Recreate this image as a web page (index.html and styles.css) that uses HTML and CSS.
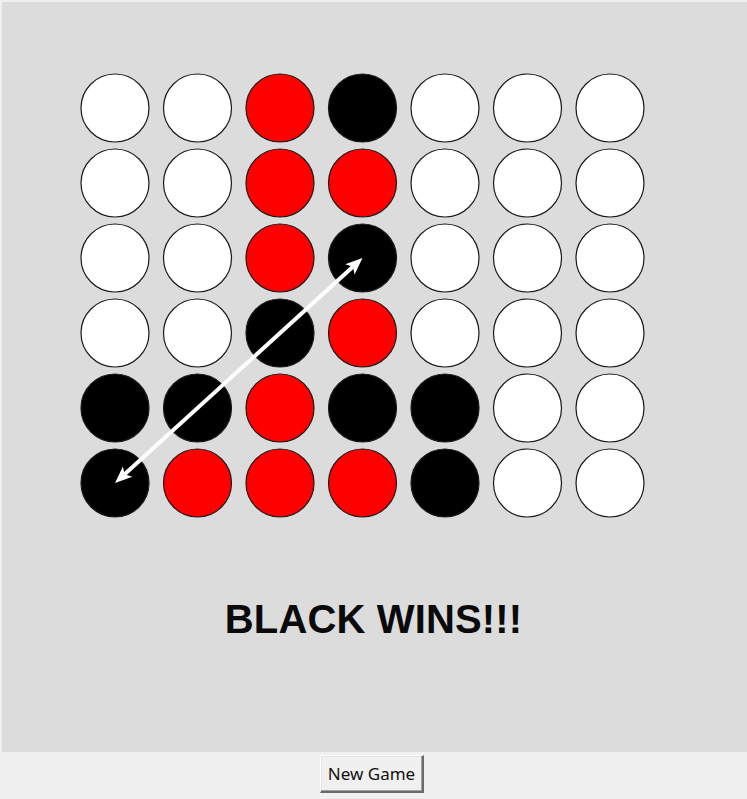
FILE: index.html
```html
<!DOCTYPE html>
<html>
<head>
<meta charset="utf-8">
<title>Connect Four</title>
<link rel="stylesheet" href="styles.css">
</head>
<body>
<div class="canvas">
  <svg class="board" width="745" height="530" viewBox="2 2 745 530" xmlns="http://www.w3.org/2000/svg">
    <g stroke="#1a1a1a" stroke-width="1.2">
      <!-- row 1 -->
      <circle cx="115" cy="108" r="34" fill="#fff"/>
      <circle cx="197.5" cy="108" r="34" fill="#fff"/>
      <circle cx="280" cy="108" r="34" fill="#f00"/>
      <circle cx="362.5" cy="108" r="34" fill="#000"/>
      <circle cx="445" cy="108" r="34" fill="#fff"/>
      <circle cx="527.5" cy="108" r="34" fill="#fff"/>
      <circle cx="610" cy="108" r="34" fill="#fff"/>
      <!-- row 2 -->
      <circle cx="115" cy="183" r="34" fill="#fff"/>
      <circle cx="197.5" cy="183" r="34" fill="#fff"/>
      <circle cx="280" cy="183" r="34" fill="#f00"/>
      <circle cx="362.5" cy="183" r="34" fill="#f00"/>
      <circle cx="445" cy="183" r="34" fill="#fff"/>
      <circle cx="527.5" cy="183" r="34" fill="#fff"/>
      <circle cx="610" cy="183" r="34" fill="#fff"/>
      <!-- row 3 -->
      <circle cx="115" cy="258" r="34" fill="#fff"/>
      <circle cx="197.5" cy="258" r="34" fill="#fff"/>
      <circle cx="280" cy="258" r="34" fill="#f00"/>
      <circle cx="362.5" cy="258" r="34" fill="#000"/>
      <circle cx="445" cy="258" r="34" fill="#fff"/>
      <circle cx="527.5" cy="258" r="34" fill="#fff"/>
      <circle cx="610" cy="258" r="34" fill="#fff"/>
      <!-- row 4 -->
      <circle cx="115" cy="333" r="34" fill="#fff"/>
      <circle cx="197.5" cy="333" r="34" fill="#fff"/>
      <circle cx="280" cy="333" r="34" fill="#000"/>
      <circle cx="362.5" cy="333" r="34" fill="#f00"/>
      <circle cx="445" cy="333" r="34" fill="#fff"/>
      <circle cx="527.5" cy="333" r="34" fill="#fff"/>
      <circle cx="610" cy="333" r="34" fill="#fff"/>
      <!-- row 5 -->
      <circle cx="115" cy="408" r="34" fill="#000"/>
      <circle cx="197.5" cy="408" r="34" fill="#000"/>
      <circle cx="280" cy="408" r="34" fill="#f00"/>
      <circle cx="362.5" cy="408" r="34" fill="#000"/>
      <circle cx="445" cy="408" r="34" fill="#000"/>
      <circle cx="527.5" cy="408" r="34" fill="#fff"/>
      <circle cx="610" cy="408" r="34" fill="#fff"/>
      <!-- row 6 -->
      <circle cx="115" cy="483" r="34" fill="#000"/>
      <circle cx="197.5" cy="483" r="34" fill="#f00"/>
      <circle cx="280" cy="483" r="34" fill="#f00"/>
      <circle cx="362.5" cy="483" r="34" fill="#f00"/>
      <circle cx="445" cy="483" r="34" fill="#000"/>
      <circle cx="527.5" cy="483" r="34" fill="#fff"/>
      <circle cx="610" cy="483" r="34" fill="#fff"/>
    </g>
    <g fill="#fff">
      <line x1="124.6" y1="474.3" x2="352.9" y2="266.8" stroke="#fff" stroke-width="4"/>
      <polygon points="362.5,258 354.6,274.6 352.9,266.8 345.2,264.3"/>
      <polygon points="115,483 132.3,476.7 124.6,474.3 122.9,466.4"/>
    </g>
  </svg>
  <div class="message">BLACK WINS!!!</div>
</div>
<div class="controls">
  <button class="btn" type="button">New Game</button>
</div>
</body>
</html>
```

FILE: styles.css
```css
html, body {
  margin: 0;
  padding: 0;
}
body {
  background: #f0f0f0;
  width: 747px;
  height: 799px;
  overflow: hidden;
}
.canvas {
  margin: 2px 0 0 2px;
  width: 745px;
  height: 750px;
  background: #dcdcdc;
  display: flex;
  flex-direction: column;
}
.board {
  display: block;
}
.message {
  margin-top: 62px;
  height: 50px;
  line-height: 50px;
  text-align: center;
  font-family: "Liberation Sans", Arial, sans-serif;
  font-weight: bold;
  font-size: 40px;
  color: #0a0a0a;
  padding-right: 2px;
  letter-spacing: 0.15px;
}
.controls {
  display: flex;
  justify-content: center;
  padding-top: 3px;
  padding-right: 3px;
}
.btn {
  width: 104px;
  height: 38px;
  margin: 0;
  padding: 0;
  background: #f0f0f0;
  border-style: solid;
  border-width: 1px 2px 2px 1px;
  border-color: #ffffff #6a6a6a #6a6a6a #ffffff;
  box-shadow: inset -1px -1px 0 #a0a0a0, inset 1px 1px 0 #e3e3e3;
  font-family: "Noto Sans", "Open Sans", sans-serif;
  font-size: 17px;
  color: #111;
  cursor: default;
}
```
